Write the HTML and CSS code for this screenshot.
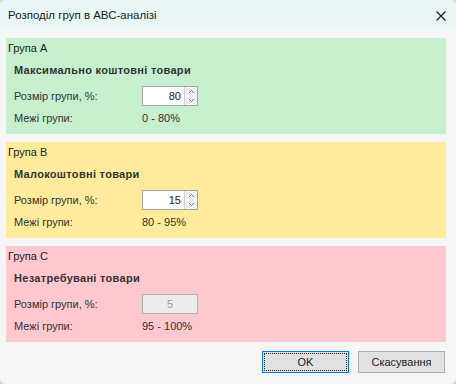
FILE: index.html
```html
<!DOCTYPE html>
<html lang="uk">
<head>
    <meta charset="UTF-8">
    <meta name="viewport" content="width=device-width, initial-scale=1.0">
    <title>Розподіл груп в АВС-аналізі</title>
    <link rel="stylesheet" href="styles.css">
</head>
<body>
    <div class="window">
        <div class="titlebar">
            <span class="title">Розподіл груп в АВС-аналізі</span>
            <svg class="close" width="10" height="10" viewBox="0 0 10 10">
                <path d="M0.5 0.5 L9.5 9.5 M9.5 0.5 L0.5 9.5" stroke="#1a1a1a" stroke-width="1.1" fill="none"/>
            </svg>
        </div>
        <div class="content">
            <div class="group group-a">
                <div class="legend">Група А</div>
                <div class="caption">Максимально коштовні товари</div>
                <div class="row">
                    <span class="label">Розмір групи, %:</span>
                    <div class="spin">
                        <input type="text" value="80">
                        <div class="spin-btns">
                            <svg width="7" height="5" viewBox="0 0 7 5"><path d="M1 4 L3.5 1.5 L6 4" stroke="#707070" fill="none"/></svg>
                            <svg width="7" height="5" viewBox="0 0 7 5"><path d="M1 1 L3.5 3.5 L6 1" stroke="#707070" fill="none"/></svg>
                        </div>
                    </div>
                </div>
                <div class="row row-bounds">
                    <span class="label">Межі групи:</span>
                    <span>0 - 80%</span>
                </div>
            </div>
            <div class="group group-b">
                <div class="legend">Група В</div>
                <div class="caption">Малокоштовні товари</div>
                <div class="row">
                    <span class="label">Розмір групи, %:</span>
                    <div class="spin">
                        <input type="text" value="15">
                        <div class="spin-btns">
                            <svg width="7" height="5" viewBox="0 0 7 5"><path d="M1 4 L3.5 1.5 L6 4" stroke="#707070" fill="none"/></svg>
                            <svg width="7" height="5" viewBox="0 0 7 5"><path d="M1 1 L3.5 3.5 L6 1" stroke="#707070" fill="none"/></svg>
                        </div>
                    </div>
                </div>
                <div class="row row-bounds">
                    <span class="label">Межі групи:</span>
                    <span>80 - 95%</span>
                </div>
            </div>
            <div class="group group-c">
                <div class="legend">Група С</div>
                <div class="caption">Незатребувані товари</div>
                <div class="row">
                    <span class="label">Розмір групи, %:</span>
                    <div class="spin disabled">
                        <input type="text" value="5" disabled>
                    </div>
                </div>
                <div class="row row-bounds">
                    <span class="label">Межі групи:</span>
                    <span>95 - 100%</span>
                </div>
            </div>
        </div>
        <div class="buttons">
            <button class="btn btn-default">OK</button>
            <button class="btn">Скасування</button>
        </div>
    </div>
</body>
</html>
```

FILE: styles.css
```css
html {
    background: #d4dcdc;
}
body {
    margin: 0;
    padding: 0;
    font-family: "Liberation Sans", Arial, sans-serif;
    font-size: 11px;
    color: #333;
}
.window {
    width: 456px;
    height: 384px;
    background: #f5f5f5;
    border-radius: 6px;
    overflow: hidden;
}
.titlebar {
    height: 30px;
    background: #e9f6f6;
    display: flex;
    align-items: center;
    justify-content: space-between;
    padding: 0 10px 0 8px;
}
.title {
    font-size: 11.5px;
    color: #1a1a1a;
}
.close {
    display: block;
    margin-top: 1px;
}
.content {
    display: flex;
    flex-direction: column;
    gap: 8px;
    padding: 8px 10px 0 6px;
}
.group {
    height: 96px;
    box-sizing: border-box;
    padding: 3px 0 0 2px;
}
.group-a {
    background: #c6efce;
}
.group-b {
    background: #ffeb9c;
}
.group-c {
    background: #ffc7ce;
}
.legend {
    line-height: 14px;
    color: #222;
}
.caption {
    font-weight: bold;
    line-height: 14px;
    margin: 8px 0 0 6px;
    letter-spacing: 0.3px;
}
.row {
    display: grid;
    grid-template-columns: 128px auto;
    align-items: center;
    height: 20px;
    margin: 9px 0 0 6px;
}
.row-bounds {
    height: 14px;
    margin-top: 5px;
}
.spin {
    display: flex;
    width: 56px;
    height: 20px;
    box-sizing: border-box;
    border: 1px solid #a6a6a6;
    background: white;
}
.spin input {
    width: 38px;
    border: none;
    padding: 0 3px 0 0;
    margin: 0;
    font: inherit;
    color: #222;
    text-align: right;
    background: transparent;
    outline: none;
}
.spin-btns {
    width: 16px;
    border-left: 1px solid #cfcfcf;
    background: #f3f3f3;
    display: flex;
    flex-direction: column;
    align-items: center;
    justify-content: space-between;
    padding: 2px 0;
    box-sizing: border-box;
}
.spin-btns svg {
    display: block;
}
.spin.disabled {
    background: #ececec;
    border-color: #b0b0b0;
}
.spin.disabled input {
    width: 100%;
    text-align: center;
    padding: 0;
    color: #999;
}
.buttons {
    display: flex;
    justify-content: flex-end;
    gap: 9px;
    padding: 9px 11px 0 0;
}
.btn {
    width: 87px;
    height: 22px;
    background: #e1e1e1;
    border: 1px solid #adadad;
    font-family: inherit;
    font-size: 11px;
    color: #222;
    padding: 0;
}
.btn-default {
    border-color: #0078d7;
    outline: 1px dotted #222;
    outline-offset: -3px;
}
```
